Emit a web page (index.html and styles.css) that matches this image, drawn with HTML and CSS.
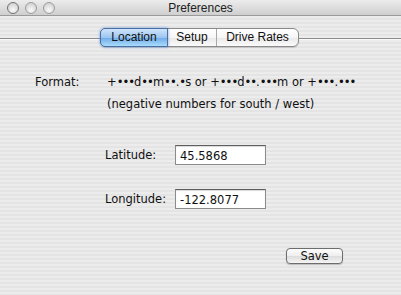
FILE: index.html
```html
<!DOCTYPE html>
<html>

<head>
	<title>Preferences</title>
	<link rel="stylesheet" href="styles.css">
</head>

<body>
	<div class="window">
		<div class="titlebar">
			<div class="lights">
				<span class="light"></span>
				<span class="light"></span>
				<span class="light"></span>
			</div>
			<div class="title">Preferences</div>
		</div>

		<div class="tabs-row">
			<div class="tabs">
				<div class="tab active">Location</div>
				<div class="tab setup">Setup</div>
				<div class="tab last">Drive Rates</div>
			</div>
		</div>

		<div class="format">
			<div class="format-label">Format:</div>
			<div class="format-text">
				<p>+<span class="b">&bull;&bull;&bull;</span>d<span class="b">&bull;&bull;</span>m<span class="b">&bull;&bull;</span>.<span class="b">&bull;</span>s or +<span class="b">&bull;&bull;&bull;</span>d<span class="b">&bull;&bull;</span>.<span class="b">&bull;&bull;&bull;</span>m or +<span class="b">&bull;&bull;&bull;</span>.<span class="b">&bull;&bull;&bull;</span></p>
				<p>(negative numbers for south / west)</p>
			</div>
		</div>

		<div class="fields">
			<div class="field">
				<label for="lat">Latitude:</label>
				<input type="text" id="lat" value="45.5868">
			</div>
			<div class="field">
				<label for="lon">Longitude:</label>
				<input type="text" id="lon" value="-122.8077">
			</div>
		</div>

		<div class="actions">
			<button type="button">Save</button>
		</div>
	</div>
</body>

</html>
```

FILE: styles.css
```css
body {
	margin: 0;
	padding: 0;
	font-family: "DejaVu Sans", Verdana, sans-serif;
	color: #111;
}

.window {
	width: 401px;
	height: 295px;
	overflow: hidden;
	background: repeating-linear-gradient(to bottom, #ececec 0, #ececec 2px, #e4e4e4 2px, #e4e4e4 4px);
}

.titlebar {
	height: 15px;
	position: relative;
	display: flex;
	align-items: center;
	justify-content: center;
	background: linear-gradient(to bottom, #ececec, #cfcfcf);
	border-bottom: 1px solid #9a9a9a;
}

.lights {
	position: absolute;
	left: 7px;
	top: 2px;
	display: flex;
	gap: 6px;
}

.light {
	width: 10px;
	height: 10px;
	border-radius: 50%;
	border: 1px solid #9c9c9c;
	background: radial-gradient(circle at 50% 70%, #fafafa, #d6d6d6 70%);
}

.light:first-child {
	border-color: #707070;
}

.title {
	font-family: "Liberation Sans", Arial, sans-serif;
	font-size: 12px;
	color: #222;
}

.tabs-row {
	margin-top: 12px;
	height: 18px;
	position: relative;
	display: flex;
	padding-left: 100px;
}

.tabs-row::before {
	content: "";
	position: absolute;
	left: 0;
	right: 0;
	top: 10px;
	border-top: 1px solid #8c8c8c;
	border-bottom: 1px solid #fafafa;
}

.tabs {
	position: relative;
	display: flex;
	height: 17px;
	border: 1px solid #8a8a8a;
	border-radius: 6px;
	background: linear-gradient(to bottom, #ffffff 0, #f6f6f6 50%, #e8e8e8 51%, #fbfbfb 100%);
	box-shadow: 0 1px 1px rgba(0, 0, 0, 0.15);
}

.tab {
	font-family: "Liberation Sans", Arial, sans-serif;
	font-size: 12px;
	line-height: 17px;
	text-align: center;
	white-space: nowrap;
	border-left: 1px solid #a8a8a8;
	color: #111;
}

.tab.active {
	width: 66px;
	border-radius: 5px 0 0 5px;
	margin: -1px 0 -1px -1px;
	line-height: 17px;
	border: 1px solid #4a6fa3;
	background: linear-gradient(to bottom, #cfe4fb 0, #9cc6f1 50%, #6fa9e8 51%, #a9dcfb 100%);
	box-shadow: 0 0 3px rgba(70, 130, 220, 0.7);
}

.tab.setup {
	width: 48px;
	border-left: none;
}

.tab.last {
	width: 81px;
}

.format {
	display: flex;
	margin-top: 29px;
	padding-left: 35px;
	font-size: 11.5px;
}

.format-label {
	width: 72px;
}

.format-text p {
	margin: 0 0 8px 0;
	line-height: 14px;
}

.b {
	letter-spacing: -1px;
}

.fields {
	display: flex;
	flex-direction: column;
	gap: 24px;
	margin-top: 26px;
	padding-left: 105px;
}

.field {
	display: flex;
	align-items: center;
}

.field label {
	width: 70px;
	font-size: 11.5px;
}

.field input {
	box-sizing: border-box;
	width: 91px;
	height: 20px;
	padding: 2px 4px 0 4px;
	border: 1px solid #8a8a8a;
	border-top-color: #5e5e5e;
	background: #fff;
	font-family: "DejaVu Sans", Verdana, sans-serif;
	font-size: 11.5px;
	color: #111;
	outline: none;
	box-shadow: inset 0 1px 1px rgba(0, 0, 0, 0.15);
}

.actions {
	display: flex;
	padding-left: 286px;
	margin-top: 39px;
}

button {
	width: 57px;
	height: 16px;
	padding: 0;
	border: 1px solid #6d6d6d;
	border-radius: 4px;
	background: linear-gradient(to bottom, #fdfdfd 0, #eeeeee 50%, #dcdcdc 51%, #f5f5f5 100%);
	box-shadow: 0 1px 1px rgba(0, 0, 0, 0.2);
	font-family: "DejaVu Sans", Verdana, sans-serif;
	font-size: 11.5px;
	line-height: 14px;
	color: #111;
}
```
